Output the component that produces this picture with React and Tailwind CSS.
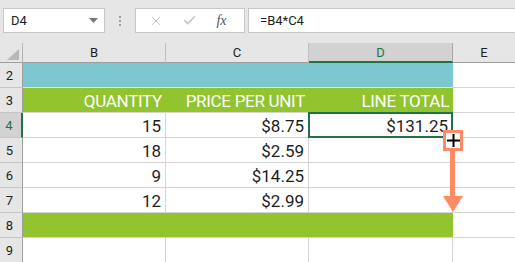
import { X, Check } from 'lucide-react'

const rows = [
  { n: 2, kind: 'teal' },
  { n: 3, kind: 'head', cells: ['QUANTITY', 'PRICE PER UNIT', 'LINE TOTAL'] },
  { n: 4, cells: ['15', '$8.75', '$131.25'], active: true },
  { n: 5, cells: ['18', '$2.59', ''] },
  { n: 6, cells: ['9', '$14.25', ''] },
  { n: 7, cells: ['12', '$2.99', ''] },
  { n: 8, kind: 'green' },
  { n: 9, cells: ['', '', ''] },
]

function RowHeader({ n, active }) {
  return (
    <div
      className={`h-[25px] flex items-center justify-center pr-[3px] pt-[1px] text-[13px] border-b border-[#c6c6c6] ${
        active
          ? 'bg-[#d2d2d2] text-[#217346] border-r-2 border-r-[#217346]'
          : 'bg-[#e6e6e6] text-[#222] border-r border-r-[#9e9e9e]'
      }`}
    >
      {n}
    </div>
  )
}

function Cell({ children, className = '' }) {
  return (
    <div
      className={`h-[25px] flex items-center justify-end pr-[4px] pt-[2px] text-[17px] leading-none ${className}`}
    >
      {children}
    </div>
  )
}

export default function App() {
  return (
    <div className="w-[515px] h-[262px] overflow-hidden bg-white font-[Roboto,sans-serif] relative">

      {/* Formula bar */}
      <div className="h-[43px] bg-[#e6e6e6] flex items-start pt-[8px] pl-[3px]">
        <div className="w-[102px] h-[25px] bg-white border border-[#c6c6c6] flex items-center pl-[7px] pr-[6px] text-[13px] text-[#222]">
          <span className="flex-1 pt-[1px]">D4</span>
          <svg width="9" height="5" viewBox="0 0 9 5">
            <path d="M0 0h9L4.5 5z" fill="#777" />
          </svg>
        </div>
        <div className="w-[30px] h-[25px] flex flex-col items-center justify-center gap-[2px]">
          <span className="w-[2px] h-[2px] bg-[#a0a0a0]" />
          <span className="w-[2px] h-[2px] bg-[#a0a0a0]" />
          <span className="w-[2px] h-[2px] bg-[#a0a0a0]" />
        </div>
        <div className="w-[110px] h-[25px] bg-white border border-[#c6c6c6] flex items-center justify-around px-[4px]">
          <X size={14} strokeWidth={1.5} className="text-[#b8b8b8]" />
          <Check size={15} strokeWidth={2.5} className="text-[#c2c2c2]" />
          <span className="font-['Liberation_Serif',serif] italic text-[14px] text-[#555] pr-[4px]">fx</span>
        </div>
        <div className="flex-1 ml-[3px] h-[25px] bg-white border border-[#c6c6c6] border-r-0 flex items-center pl-[11px] text-[13px] text-[#222]">
          =B4*C4
        </div>
      </div>

      {/* Sheet */}
      <div className="grid grid-cols-[23px_143px_143px_144px_1fr]">
        {/* Column headers */}
        <div className="h-[20px] bg-[#e6e6e6] border-r border-r-[#b4b4b4] border-b border-b-[#9e9e9e] flex items-end justify-end pr-[3px] pb-[2px]">
          <svg width="12" height="11" viewBox="0 0 12 11">
            <path d="M12 0V11H0z" fill="#b8b8b8" />
          </svg>
        </div>
        {['B', 'C'].map(c => (
          <div key={c} className="h-[20px] bg-[#e6e6e6] border-r border-r-[#c0c0c0] border-b border-b-[#9e9e9e] flex items-center justify-center text-[13px] text-[#222]">
            {c}
          </div>
        ))}
        <div className="h-[20px] bg-[#d2d2d2] border-r border-r-[#a8a8a8] border-b-2 border-b-[#217346] flex items-center justify-center pt-[1px] text-[13px] text-[#217346]">
          D
        </div>
        <div className="h-[20px] bg-[#e6e6e6] border-b border-b-[#9e9e9e] flex items-center justify-center text-[13px] text-[#222]">
          E
        </div>

        {rows.map(r => {
          if (r.kind === 'teal' || r.kind === 'green') {
            return [
              <RowHeader key={`h${r.n}`} n={r.n} />,
              <div
                key={`f${r.n}`}
                className={`col-span-3 h-[25px] border-b ${
                  r.kind === 'teal' ? 'bg-[#7bc6cf] border-b-[#e2e2e2]' : 'bg-[#92c42e] border-b-[#d4d4d4]'
                }`}
              />,
              <div key={`e${r.n}`} className="h-[25px] border-b border-[#d4d4d4]" />,
            ]
          }
          if (r.kind === 'head') {
            return [
              <RowHeader key={`h${r.n}`} n={r.n} />,
              ...r.cells.map((t, i) => (
                <Cell key={`c${r.n}${i}`} className="bg-[#92c42e] text-white border-b border-[#d4d4d4] tracking-[-0.3px]">
                  {t}
                </Cell>
              )),
              <div key={`e${r.n}`} className="h-[25px] border-b border-[#d4d4d4]" />,
            ]
          }
          return [
            <RowHeader key={`h${r.n}`} n={r.n} active={r.active} />,
            ...r.cells.map((t, i) => (
              <Cell
                key={`c${r.n}${i}`}
                className={`text-[#1e1e1e] border-b border-r border-[#d4d4d4] ${i === 2 && r.active ? 'relative' : ''}`}
              >
                {t}
                {i === 2 && r.active && (
                  <div className="absolute left-[-1px] top-[-1px] right-[-1px] bottom-[-1px] border-2 border-[#217346]" />
                )}
              </Cell>
            )),
            <div key={`e${r.n}`} className="h-[25px] border-b border-[#d4d4d4]" />,
          ]
        })}
      </div>

      {/* Fill handle annotation */}
      <div className="absolute left-[443px] top-[130px] w-[20px] h-[21px] border-[3px] border-[#fe8b66] bg-white flex items-center justify-center">
        <svg width="13" height="13" viewBox="0 0 13 13">
          <path d="M5.5 0h2v5.5H13v2H7.5V13h-2V7.5H0v-2h5.5z" fill="#000" />
        </svg>
      </div>
      <div className="absolute left-[450px] top-[151px] w-[5px] h-[46px] bg-[#fe8b66]" />
      <svg className="absolute left-[443px] top-[196px]" width="20" height="16" viewBox="0 0 20 16">
        <path d="M0 0h20L10 16z" fill="#fe8b66" />
      </svg>
    </div>
  )
}
